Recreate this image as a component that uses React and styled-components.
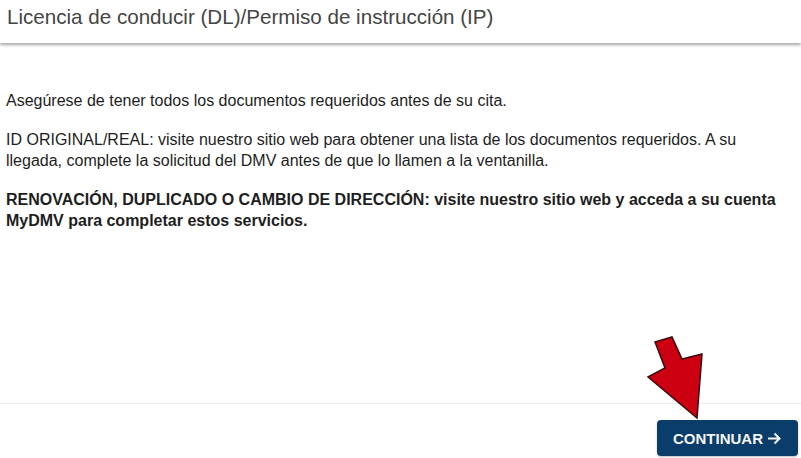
import React from 'react';
import styled, { createGlobalStyle } from 'styled-components';

const Global = createGlobalStyle`
    html, body {
        margin: 0;
        padding: 0;
        background: #fff;
    }
    body {
        font-family: "Liberation Sans", Arial, sans-serif;
    }
`

const Page = styled.div`
    width: 801px;
    height: 458px;
    display: flex;
    flex-direction: column;
    position: relative;
    overflow: hidden;
    background: #fff;
`

const Header = styled.div`
    height: 43px;
    flex: none;
    display: flex;
    align-items: center;
    padding: 0 7px;
    box-sizing: border-box;
    box-shadow: 0 2px 3px rgba(0, 0, 0, 0.35);
    position: relative;
    z-index: 2;
`

const Title = styled.h1`
    margin: 0 0 9px;
    font-size: 20.6px;
    font-weight: normal;
    color: #454545;
`

const Body = styled.div`
    flex: 1;
    padding: 47px 6px 0;
`

const Text = styled.p`
    margin: 0 0 18px;
    font-size: 16px;
    line-height: 21px;
    color: #1e1e1e;
    font-weight: ${p => (p.bold ? 'bold' : 'normal')};
    max-width: 785px;
`

const Footer = styled.div`
    height: 55px;
    flex: none;
    border-top: 1px solid #ededed;
    box-shadow: 0 -1px 2px rgba(0, 0, 0, 0.04);
    display: flex;
    justify-content: flex-end;
    align-items: flex-start;
    padding: 16px 3px 0;
    box-sizing: border-box;
`

const Button = styled.button`
    height: 36px;
    width: 141px;
    border: none;
    border-radius: 4px;
    background: #0b3d6b;
    box-shadow: 0 1px 2px rgba(0, 0, 0, 0.25);
    color: #f4f6f8;
    font-family: "Liberation Sans", Arial, sans-serif;
    font-weight: bold;
    font-size: 15px;
    display: flex;
    align-items: center;
    justify-content: center;
    gap: 4px;
    padding: 0;
    cursor: pointer;
`

const Pointer = styled.svg`
    position: absolute;
    left: 0;
    top: 0;
    pointer-events: none;
`

export default function App() {
    return (
        <Page>
            <Global />
            <Header>
                <Title>Licencia de conducir (DL)/Permiso de instrucción (IP)</Title>
            </Header>
            <Body>
                <Text>Asegúrese de tener todos los documentos requeridos antes de su cita.</Text>
                <Text>ID ORIGINAL/REAL: visite nuestro sitio web para obtener una lista de los documentos requeridos. A su llegada, complete la solicitud del DMV antes de que lo llamen a la ventanilla.</Text>
                <Text bold>RENOVACIÓN, DUPLICADO O CAMBIO DE DIRECCIÓN: visite nuestro sitio web y acceda a su cuenta MyDMV para completar estos servicios.</Text>
            </Body>
            <Footer>
                <Button>
                    CONTINUAR
                    <svg width="15" height="13" viewBox="0 0 15 13">
                        <path d="M1 6.5h12M7.5 1.5l5 5-5 5" stroke="#f4f6f8" strokeWidth="2" fill="none" />
                    </svg>
                </Button>
            </Footer>
            <Pointer width="801" height="458">
                <polygon
                    points="655,342 672,337 682,359 702,354 697,418 648,377 665,368"
                    fill="#cc0010"
                    stroke="#3a0a10"
                    strokeWidth="1.5"
                    strokeLinejoin="miter"
                />
            </Pointer>
        </Page>
    );
}
